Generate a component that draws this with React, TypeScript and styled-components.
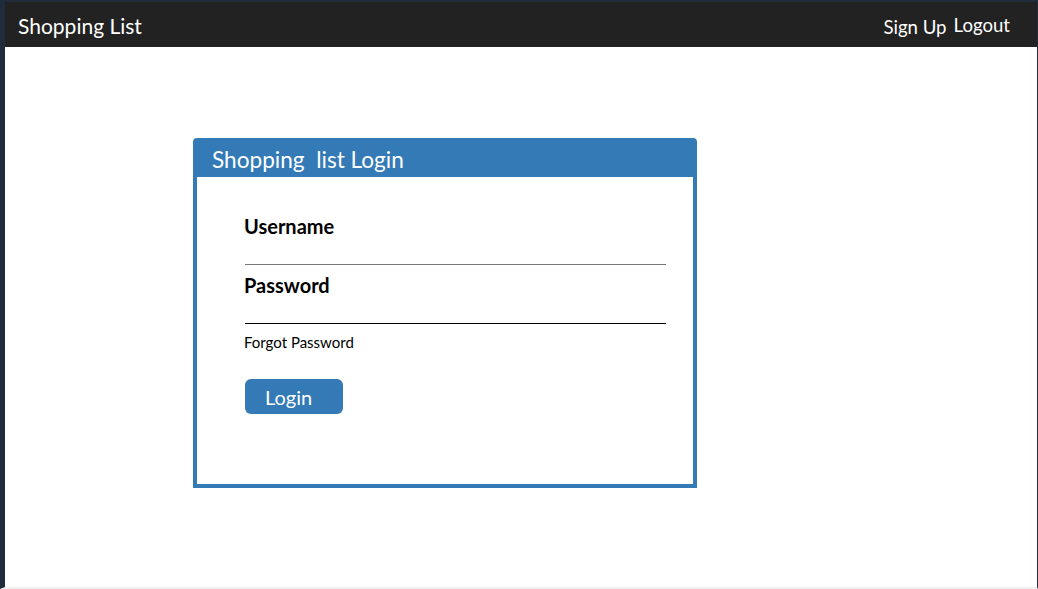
import React from "react";
import styled, { createGlobalStyle } from "styled-components";

const GlobalStyle = createGlobalStyle`
  html, body { margin: 0; padding: 0; background: #ffffff; }
  body { font-family: Lato, "Open Sans", "Liberation Sans", sans-serif; }
  * { box-sizing: border-box; }
`;

const Frame = styled.div`
  width: 1038px;
  height: 589px;
  display: flex;
  flex-direction: column;
  border-top: 2px solid #1f2c3b;
  border-left: 5px solid #1f2c3b;
  border-right: 1px solid #1f2c3b;
  border-bottom: 2px solid #efefef;
  background: #ffffff;
  overflow: hidden;
`;

const NavBar = styled.header`
  height: 45px;
  flex: none;
  background: #222222;
  display: flex;
  align-items: center;
  justify-content: space-between;
  padding: 0 27px 0 13px;
  color: #ffffff;
`;

const Brand = styled.div`
  font-size: 21px;
  line-height: 26px;
  margin-top: 3px;
`;

const NavLinks = styled.nav`
  display: flex;
  align-items: center;
  gap: 7px;
`;

const NavLink = styled.a<{ $shift: number }>`
  color: #ffffff;
  font-size: 18.6px;
  line-height: 24px;
  text-decoration: none;
  position: relative;
  top: ${(p) => p.$shift}px;
`;

const Content = styled.main`
  flex: 1;
  padding: 91px 0 0 188px;
`;

const Card = styled.section`
  width: 504px;
  height: 350px;
  background: #337ab7;
  border-radius: 4px 4px 0 0;
  padding: 0 4px 4px;
  display: flex;
  flex-direction: column;
`;

const CardHeader = styled.h2`
  margin: 0;
  height: 39px;
  padding: 9px 0 0 15px;
  font-size: 22.6px;
  line-height: 26px;
  font-weight: 400;
  color: #ffffff;
  white-space: pre;
`;

const CardBody = styled.form`
  flex: 1;
  background: #ffffff;
  padding: 37px 0 0 47px;
  display: flex;
  flex-direction: column;
  align-items: flex-start;
`;

const Label = styled.label`
  font-size: 20px;
  line-height: 24px;
  font-weight: 700;
  color: #000000;
`;

const Input = styled.input<{ $line: string; $gap: number }>`
  width: 421px;
  height: 27px;
  margin: 0 0 ${(p) => p.$gap}px 1px;
  border: none;
  border-bottom: 1px solid ${(p) => p.$line};
  outline: none;
  background: transparent;
  font-family: inherit;
  font-size: 16px;
`;

const Forgot = styled.a`
  font-size: 15px;
  line-height: 18px;
  color: #000000;
  text-decoration: none;
`;

const LoginButton = styled.button`
  margin: 28px 0 0 1px;
  width: 98px;
  height: 35px;
  border: none;
  border-radius: 6px;
  background: #337ab7;
  color: #ffffff;
  font-family: inherit;
  font-size: 20px;
  text-align: left;
  padding: 0 0 0 20px;
`;

export default function App() {
  return (
    <>
      <GlobalStyle />
      <Frame>
        <NavBar>
          <Brand>Shopping List</Brand>
          <NavLinks>
            <NavLink $shift={2} href="#">Sign Up</NavLink>
            <NavLink $shift={0} href="#">Logout</NavLink>
          </NavLinks>
        </NavBar>
        <Content>
          <Card>
            <CardHeader>{"Shopping  list Login"}</CardHeader>
            <CardBody onSubmit={(e) => e.preventDefault()}>
              <Label>Username</Label>
              <Input $line="#777777" $gap={8} />
              <Label>Password</Label>
              <Input $line="#000000" $gap={9} type="password" />
              <Forgot href="#">Forgot Password</Forgot>
              <LoginButton type="submit">Login</LoginButton>
            </CardBody>
          </Card>
        </Content>
      </Frame>
    </>
  );
}
